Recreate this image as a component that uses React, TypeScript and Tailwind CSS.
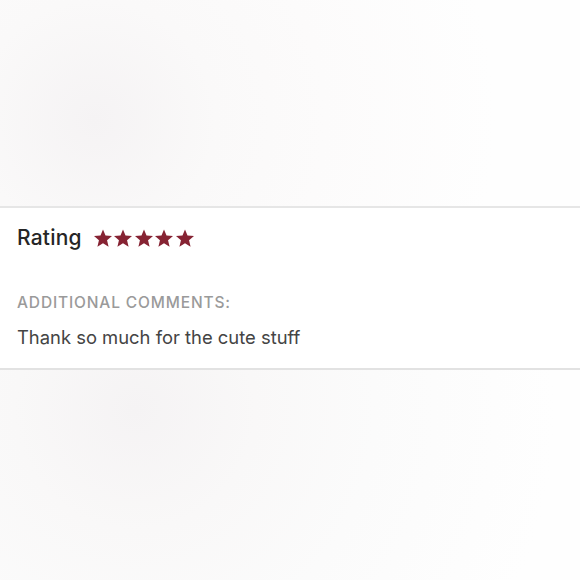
import React from "react";

const Star = () => (
  <svg width="18" height="18" viewBox="0.9 0.4 22.2 21.6" className="block">
    <path
      d="M12 0.6l3.1 7.4 8 .7-6.1 5.3 1.9 7.9L12 17.8l-6.9 4.1L7 14l-6.1-5.3 8-.7z"
      fill="#862333"
    />
  </svg>
);

export default function App() {
  return (
    <div
      className="w-[580px] h-[580px] flex flex-col bg-[#fbfbfb] overflow-hidden"
      style={{ fontFamily: "Inter, 'Open Sans', sans-serif" }}
    >
      <div className="h-[206px] bg-[radial-gradient(circle_at_95px_120px,#f5f3f4_0px,#faf9f9_120px,#fcfbfb_230px,#fefefe_400px)]" />
      <div className="h-[2px] bg-[#e6e6e6]" />
      <div className="h-[160px] bg-white px-[17px] flex flex-col">
        <div className="flex items-center mt-[16px] h-[28px]">
          <span className="text-[21px] font-medium text-[#262626] tracking-[0.2px]">Rating</span>
          <div className="flex ml-[12px] gap-[2.5px]">
            <Star />
            <Star />
            <Star />
            <Star />
            <Star />
          </div>
        </div>
        <div className="mt-[41px] text-[15.5px] font-medium text-[#9a9a9a] tracking-[0.85px] leading-[20px]">
          ADDITIONAL COMMENTS:
        </div>
        <div className="mt-[12px] text-[18.4px] text-[#444444] leading-[24px]">
          Thank so much for the cute stuff
        </div>
      </div>
      <div className="h-[2px] bg-[#e2e2e2]" />
      <div className="flex-1 bg-[radial-gradient(circle_at_135px_40px,#f5f3f4_0px,#f9f8f8_120px,#fbfbfb_240px,#fefefe_420px)]" />
    </div>
  );
}
